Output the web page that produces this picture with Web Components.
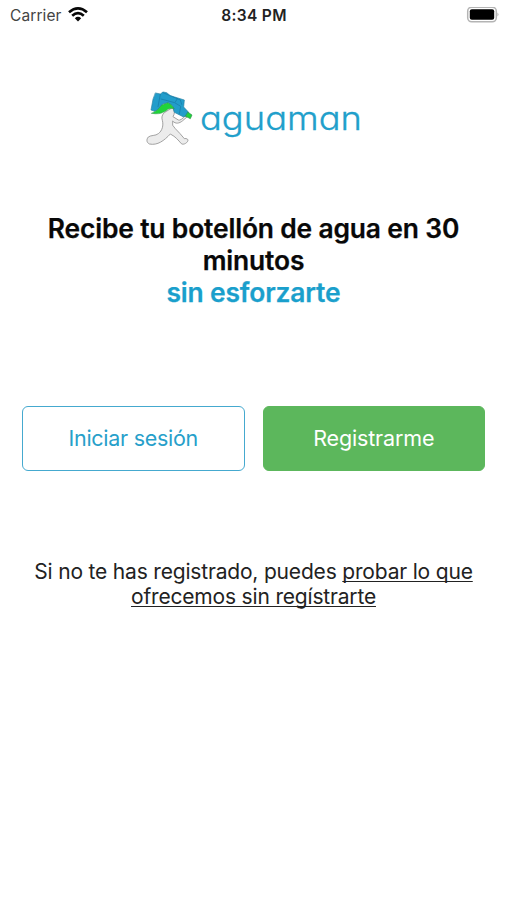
<!DOCTYPE html>
<html lang="es"><head><meta charset="utf-8"><title>Aguaman</title>
<style>body{margin:0;background:#fff;font-family:Inter,"Liberation Sans",sans-serif}</style></head>
<body><welcome-screen></welcome-screen>
<script>
const define=(name,html)=>customElements.define(name,class extends HTMLElement{
  constructor(){super();this.attachShadow({mode:"open"}).innerHTML=html}
});
define("status-bar",`<style>
:host{display:grid;grid-template-columns:1fr auto 1fr;align-items:center;height:30px;padding:0 8px 0 10px;box-sizing:border-box;font-size:15.5px;color:#444}
.left{display:flex;align-items:center;gap:7px}
.time{font-weight:600;font-size:15.5px;color:#222;letter-spacing:.35px;margin-right:1px}
.battery{justify-self:end;display:block}svg{display:block}.carrier{letter-spacing:.1px}
.wifi{margin-left:-1px;margin-top:-1px}
</style>
<div class="left"><span class="carrier">Carrier</span>
<svg class="wifi" width="20" height="15" viewBox="0 0 20 15" fill="none" stroke="#080808" stroke-width="2.7"><path d="M1 5.3Q10-2.4 19 5.3"/><path d="M4.2 8.8Q10 3.6 15.8 8.8"/><path d="M6.8 11.3Q10 8.4 13.2 11.3L10 14.6Z" fill="#080808" stroke="none"/></svg></div>
<span class="time">8:34 PM</span>
<svg class="battery" width="33" height="17" viewBox="0 0 33 17"><rect x="1.7" y=".2" width="28.6" height="14.6" rx="4" fill="#fff" stroke="#b4b4b4" stroke-width="1.5"/><rect x="3.8" y="2.3" width="24.4" height="10.4" rx="2" fill="#000"/><path d="M31.5 5.4Q33.4 7.5 31.5 9.6Z" fill="#aaa"/></svg>`);
define("brand-logo",`<style>:host{display:block;height:64px}svg{display:block}
text{font-family:Inter,"Liberation Sans",sans-serif;font-size:33px;font-weight:300;font-feature-settings:"cv11";fill:#219fcb;stroke:#219fcb;stroke-width:.3}</style>
<svg width="507" height="64" viewBox="0 0 507 64" role="img" aria-label="aguaman">
<g transform="translate(140 0) scale(.33333)" stroke-linejoin="round" stroke-linecap="round">
<path d="M73 80C66 86 64 94 67 103C71 118 67 134 55 143C47 150 32 147 25 153C19 160 19 169 28 174C53 179 72 164 91 144C108 153 114 162 124 173C132 179 148 166 143 160Q138 156 133 158Q120 142 106 128Q94 119 98 105C107 115 118 112 127 105L142 92L137 88Q122 105 115 102L99 92Q108 78 98 66Z" fill="#ececec" stroke="#909090" stroke-width="2.5"/>
<path d="M47 21L61 24L69 18L80 20L91 29L133 42L131 63L146 79L142 90L129 92L103 79L97 59L85 50L68 54L57 69L45 76L33 72L39 40Z" fill="#229dcb" stroke="#2b82a3" stroke-width="2"/>
<path d="M61 25L54 62M69 20L121 42L125 55M63 39L104 50L122 61L118 84M106 48L112 38" fill="none" stroke="#187fac" stroke-width="2.5"/>
<path d="M35 82Q55 74 65 57L84 50Q98 57 103 68Q87 63 76 76Q58 87 35 82Z" fill="#20d43a" stroke="#32904b" stroke-width="1.5"/>
<path d="M144 79L156 87L151 98L137 91Z" fill="#20d43a" stroke="#31904b" stroke-width="2"/></g>
<text x="200" y="44" textLength="162" lengthAdjust="spacingAndGlyphs">aguaman</text></svg>`);
define("hero-title",`<style>:host{display:block;text-align:center;font-size:26.4px;line-height:32.2px;font-weight:600;letter-spacing:-.16px;color:#080808;-webkit-text-stroke:.25px currentColor}
h1{font:inherit;margin:0}.line{display:block;white-space:nowrap}.accent{color:#1a9fcc}</style>
<h1><span class="line"><slot></slot></span><span class="line"><slot name="second"></slot></span><span class="line accent"><slot name="accent"></slot></span></h1>`);
define("action-button",`<style>:host{display:block}button{width:100%;height:65px;box-sizing:border-box;border:1.5px solid #45a9cf;border-radius:6px;background:#fff;color:#279fca;font:400 21.5px Inter,"Liberation Sans",sans-serif;letter-spacing:-.28px;padding:0}
:host([primary]) button{background:#5cb75c;border-color:#5cb75c;color:#fff;letter-spacing:-.15px}</style><button><slot></slot></button>`);
define("guest-link",`<style>:host{display:block;text-align:center;font-size:21px;line-height:25.7px;letter-spacing:-.18px;color:#222}.line{display:block;white-space:nowrap}a{color:inherit;text-decoration:underline;text-decoration-thickness:1px;text-underline-offset:2px;text-decoration-skip-ink:none}</style>
<span class="line">Si no te has registrado, puedes <a>probar lo que</a></span><span class="line"><a>ofrecemos sin regístrarte</a></span>`);
define("welcome-screen",`<style>:host{display:block;width:507px;height:900px;background:#fff;overflow:hidden}
brand-logo{margin-top:56px}hero-title{margin-top:62px}.actions{display:grid;grid-template-columns:1fr 1fr;gap:18px;padding:0 22px;margin-top:97px}guest-link{margin-top:88px}</style>
<status-bar></status-bar><brand-logo></brand-logo>
<hero-title>Recibe tu botellón de agua en 30<span slot="second">minutos</span><span slot="accent">sin esforzarte</span></hero-title>
<div class="actions"><action-button>Iniciar sesión</action-button><action-button primary>Registrarme</action-button></div><guest-link></guest-link>`);
</script></body></html>
